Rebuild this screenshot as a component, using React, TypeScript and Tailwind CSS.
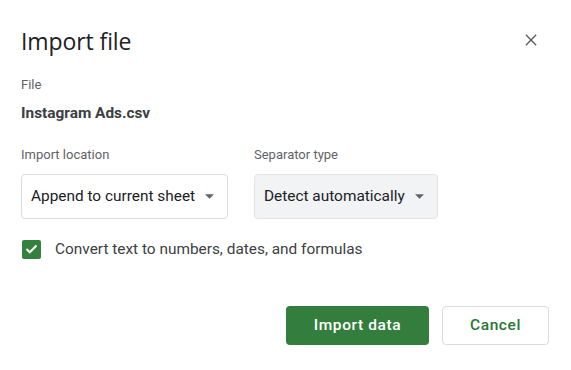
import React from 'react';

const Caret = () => (
  <svg width="9" height="5" viewBox="0 0 10 5" className="ml-[10px] flex-none" aria-hidden="true">
    <path d="M0 0h10L5 5z" fill="#5f6368" />
  </svg>
);

export default function App() {
  return (
    <div className="h-[370px] w-[571px] bg-white font-['Roboto',sans-serif] text-[#202124]">
      <div className="flex items-start justify-between pl-[21px] pr-[32px] pt-[26px]">
        <h1 className="font-['Open_Sans',sans-serif] text-[23px] leading-[30px] tracking-[-0.1px]">Import file</h1>
        <button className="mt-[6px] grid h-[16px] w-[16px] place-items-center" aria-label="Close">
          <svg width="12" height="12" viewBox="0 0 14 14" aria-hidden="true">
            <path d="M1 1l12 12M13 1L1 13" stroke="#5f6368" strokeWidth="1.7" />
          </svg>
        </button>
      </div>

      <div className="px-[21px]">
        <p className="mt-[21px] text-[13px] leading-[16px] text-[#5f6368]">File</p>
        <p className="mt-[11px] text-[15.4px] font-bold leading-[19px] text-[#3c4043]">Instagram Ads.csv</p>

        <div className="mt-[24px] flex gap-[26px]">
          <div className="flex flex-col">
            <span className="text-[13px] leading-[16px] text-[#5f6368]">Import location</span>
            <div className="mt-[11px] flex h-[45px] w-[207px] items-center rounded-[4px] border border-[#dadce0] bg-white px-[9px] text-[15.4px]">
              <span>Append to current sheet</span>
              <Caret />
            </div>
          </div>
          <div className="flex flex-col">
            <span className="text-[13px] leading-[16px] text-[#5f6368]">Separator type</span>
            <div className="mt-[11px] flex h-[45px] w-[184px] items-center rounded-[4px] border border-[#e1e3e5] bg-[#f1f3f4] px-[9px] text-[15.4px]">
              <span>Detect automatically</span>
              <Caret />
            </div>
          </div>
        </div>

        <label className="mt-[20px] flex items-center gap-[14px]">
          <span className="ml-[1px] grid h-[19px] w-[19px] place-items-center rounded-[2px] bg-[#34803d]">
            <svg width="13" height="10" viewBox="0 0 13 10" aria-hidden="true">
              <path d="M1.5 5l3.3 3.3L11.5 1.5" stroke="#fff" strokeWidth="2" fill="none" />
            </svg>
          </span>
          <span className="text-[15.4px] leading-[20px] text-[#3c4043]">Convert text to numbers, dates, and formulas</span>
        </label>
      </div>

      <div className="mt-[47px] flex justify-end gap-[13px] pr-[22px]">
        <button className="h-[39px] w-[143px] rounded-[4px] bg-[#347e3d] text-[15.5px] font-medium tracking-[0.6px] text-white">Import data</button>
        <button className="h-[39px] w-[107px] rounded-[4px] border border-[#dadce0] bg-white text-[15.5px] font-medium tracking-[0.6px] text-[#287834]">Cancel</button>
      </div>
    </div>
  );
}
